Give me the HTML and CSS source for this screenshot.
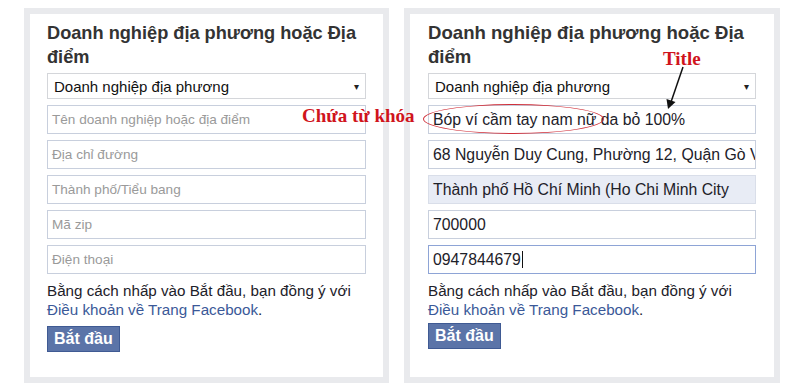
FILE: index.html
```html
<!DOCTYPE html>
<html lang="vi">
  <head>
    <meta charset="UTF-8" />
    <meta name="viewport" content="width=device-width, initial-scale=1.0" />
    <title>Doanh nghiệp địa phương hoặc Địa điểm</title>
    <link rel="stylesheet" href="styles.css">
  </head>
  <body>
    <div class="panel panel-empty">
      <h2>Doanh nghiệp địa phương hoặc Địa điểm</h2>
      <div class="form">
        <div class="select">Doanh nghiệp địa phương<span class="caret">&#9662;</span></div>
        <div class="field placeholder">Tên doanh nghiệp hoặc địa điểm</div>
        <div class="field placeholder">Địa chỉ đường</div>
        <div class="field placeholder">Thành phố/Tiểu bang</div>
        <div class="field placeholder">Mã zip</div>
        <div class="field placeholder">Điện thoại</div>
      </div>
      <p class="terms">
        Bằng cách nhấp vào Bắt đầu, bạn đồng ý với<br>
        <a href="#">Điều khoản về Trang Facebook</a>.
      </p>
      <button class="start-button">Bắt đầu</button>
    </div>

    <div class="panel panel-filled">
      <h2>Doanh nghiệp địa phương hoặc Địa điểm</h2>
      <div class="form">
        <div class="select">Doanh nghiệp địa phương<span class="caret">&#9662;</span></div>
        <div class="field">Bóp ví cầm tay nam nữ da bỏ 100%</div>
        <div class="field">68 Nguyễn Duy Cung, Phường 12, Quận Gò Vấp</div>
        <div class="field autofill">Thành phố Hồ Chí Minh (Ho Chi Minh City</div>
        <div class="field">700000</div>
        <div class="field focused">0947844679<span class="cursor"></span></div>
      </div>
      <p class="terms">
        Bằng cách nhấp vào Bắt đầu, bạn đồng ý với<br>
        <a href="#">Điều khoản về Trang Facebook</a>.
      </p>
      <button class="start-button">Bắt đầu</button>
    </div>

    <!-- annotations drawn over the screenshot -->
    <span class="note note-keyword">Chứa từ khóa</span>
    <span class="note note-title">Title</span>
    <span class="ring"></span>
    <svg class="arrow" width="40" height="50" viewBox="0 0 40 50">
      <line x1="26" y1="3" x2="14" y2="38" stroke="#111" stroke-width="1.5" />
      <polygon points="11,45 9.5,35 18.5,38" fill="#111" />
    </svg>
  </body>
</html>
```

FILE: styles.css
```css
/* Base */
* {
  box-sizing: border-box;
  margin: 0;
  padding: 0;
}
body {
  font-family: "Liberation Sans", Arial, sans-serif;
  background: #fff;
  color: #1d2129;
  display: flex;
  gap: 15px;
  padding: 8px 0 0 24px;
  position: relative;
  min-height: 383px;
}

/* Panels */
.panel {
  background: #fff;
  border: 6px solid #e9eaed;
  padding: 7px 17px 15px;
}
.panel-empty {
  width: 365px;
}
.panel-filled {
  width: 376px;
  padding: 7px 18px 15px;
}
h2 {
  font-size: 18.2px;
  line-height: 24px;
  font-weight: bold;
  color: #333;
  margin-bottom: 4px;
}
.panel-filled h2 {
  font-size: 18.6px;
}

/* Form */
.form {
  display: flex;
  flex-direction: column;
  gap: 6px;
}
.select,
.field {
  white-space: nowrap;
  overflow: hidden;
  display: flex;
  align-items: center;
}
.select {
  font-size: 15px;
  height: 26px;
  border: 1px solid #d4d6da;
  padding: 0 6px;
  color: #111;
  justify-content: space-between;
}
.caret {
  font-size: 10px;
  color: #222;
}
.field {
  font-size: 15.8px;
  height: 29px;
  border: 1px solid #c8cfdd;
  padding: 0 4px;
  color: #1d2129;
}
.placeholder {
  font-size: 13.6px;
  color: #9a9a9a;
}
.autofill {
  background: #e8ecf5;
  border-color: #d9dee9;
}
.focused {
  border-color: #8ea4d6;
}
.cursor {
  display: inline-block;
  width: 1px;
  height: 17px;
  background: #111;
  margin-left: 1px;
}

/* Terms + button */
.terms {
  font-size: 15.2px;
  line-height: 19px;
  margin: 7px 0 7px;
  color: #1d2129;
}
.terms a {
  color: #3b5998;
  text-decoration: none;
}
.start-button {
  font-family: "Liberation Sans", Arial, sans-serif;
  font-size: 16px;
  font-weight: bold;
  color: #fff;
  background: #5b74a8;
  border: 1px solid #3f5a93;
  height: 26px;
  padding: 0 6px;
}
.panel-filled .start-button {
  margin-top: -3px;
}

/* Annotations */
.note {
  position: absolute;
  font-family: "Liberation Serif", "Times New Roman", serif;
  font-weight: bold;
  font-size: 19px;
  color: #d0141c;
  line-height: 1;
}
.note-keyword {
  left: 302px;
  top: 106px;
}
.note-title {
  left: 663px;
  top: 49px;
}
.ring {
  position: absolute;
  left: 423px;
  top: 104px;
  width: 181px;
  height: 30px;
  border: 1.5px solid #d0303a;
  border-radius: 50%;
}
.arrow {
  position: absolute;
  left: 657px;
  top: 64px;
}
```
